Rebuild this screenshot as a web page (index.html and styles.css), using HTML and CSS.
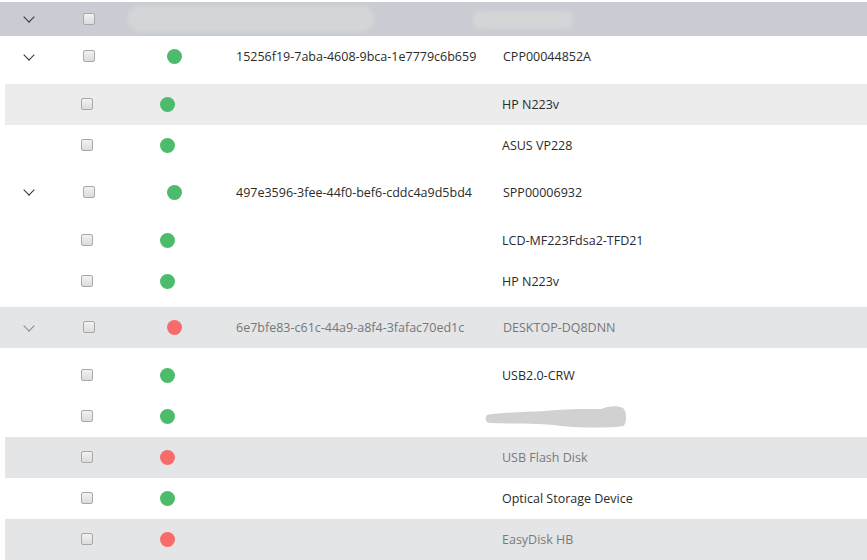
FILE: index.html
```html
<!DOCTYPE html>
<html>
<head>
<meta charset="utf-8">
<link rel="stylesheet" href="styles.css">
</head>
<body>
<div class="table">
  <div class="row head">
    <div class="c-exp"><span class="chev"></span></div>
    <div class="c-chk"><span class="box"></span></div>
    <div class="c-blur1"><span class="blob1"></span></div>
    <div class="c-blur2"><span class="blob2"></span></div>
  </div>

  <div class="group">
    <div class="row parent">
      <div class="c-exp"><span class="chev"></span></div>
      <div class="c-chk"><span class="box"></span></div>
      <div class="c-dot"><span class="dot on"></span></div>
      <div class="c-id">15256f19-7aba-4608-9bca-1e7779c6b659</div>
      <div class="c-name">CPP00044852A</div>
    </div>
    <div class="children">
      <div class="row child alt">
        <div class="c-pad"></div>
        <div class="c-chk2"><span class="box"></span></div>
        <div class="c-dot2"><span class="dot on"></span></div>
        <div class="c-sp"></div>
        <div class="c-name">HP N223v</div>
      </div>
      <div class="row child">
        <div class="c-pad"></div>
        <div class="c-chk2"><span class="box"></span></div>
        <div class="c-dot2"><span class="dot on"></span></div>
        <div class="c-sp"></div>
        <div class="c-name">ASUS VP228</div>
      </div>
    </div>
  </div>

  <div class="group">
    <div class="row parent">
      <div class="c-exp"><span class="chev"></span></div>
      <div class="c-chk"><span class="box"></span></div>
      <div class="c-dot"><span class="dot on"></span></div>
      <div class="c-id">497e3596-3fee-44f0-bef6-cddc4a9d5bd4</div>
      <div class="c-name">SPP00006932</div>
    </div>
    <div class="children">
      <div class="row child">
        <div class="c-pad"></div>
        <div class="c-chk2"><span class="box"></span></div>
        <div class="c-dot2"><span class="dot on"></span></div>
        <div class="c-sp"></div>
        <div class="c-name">LCD-MF223Fdsa2-TFD21</div>
      </div>
      <div class="row child">
        <div class="c-pad"></div>
        <div class="c-chk2"><span class="box"></span></div>
        <div class="c-dot2"><span class="dot on"></span></div>
        <div class="c-sp"></div>
        <div class="c-name">HP N223v</div>
      </div>
    </div>
  </div>

  <div class="group">
    <div class="row parent off">
      <div class="c-exp"><span class="chev light"></span></div>
      <div class="c-chk"><span class="box"></span></div>
      <div class="c-dot"><span class="dot err"></span></div>
      <div class="c-id">6e7bfe83-c61c-44a9-a8f4-3fafac70ed1c</div>
      <div class="c-name">DESKTOP-DQ8DNN</div>
    </div>
    <div class="children">
      <div class="row child">
        <div class="c-pad"></div>
        <div class="c-chk2"><span class="box"></span></div>
        <div class="c-dot2"><span class="dot on"></span></div>
        <div class="c-sp"></div>
        <div class="c-name">USB2.0-CRW</div>
      </div>
      <div class="row child">
        <div class="c-pad"></div>
        <div class="c-chk2"><span class="box"></span></div>
        <div class="c-dot2"><span class="dot on"></span></div>
        <div class="c-sp"></div>
        <div class="c-name shift"><svg class="smudge" width="144" height="24" viewBox="0 0 144 24"><path d="M4 10 C2 12 2 17 6 18 C30 19 60 18 78 21 C100 23 130 23 140 21 C144 19 144 6 140 3 C134 0 125 1 118 4 C100 4 85 4 62 6 C45 7 20 7 4 10 Z" fill="#d1d1d1"/></svg></div>
      </div>
      <div class="row child off">
        <div class="c-pad"></div>
        <div class="c-chk2"><span class="box"></span></div>
        <div class="c-dot2"><span class="dot err"></span></div>
        <div class="c-sp"></div>
        <div class="c-name">USB Flash Disk</div>
      </div>
      <div class="row child">
        <div class="c-pad"></div>
        <div class="c-chk2"><span class="box"></span></div>
        <div class="c-dot2"><span class="dot on"></span></div>
        <div class="c-sp"></div>
        <div class="c-name">Optical Storage Device</div>
      </div>
      <div class="row child off">
        <div class="c-pad"></div>
        <div class="c-chk2"><span class="box"></span></div>
        <div class="c-dot2"><span class="dot err"></span></div>
        <div class="c-sp"></div>
        <div class="c-name">EasyDisk HB</div>
      </div>
    </div>
  </div>
</div>
</body>
</html>
```

FILE: styles.css
```css
html, body {
  margin: 0;
  padding: 0;
  background: #ffffff;
  overflow: hidden;
}
body {
  font-family: "Open Sans", "Noto Sans", "Liberation Sans", sans-serif;
  font-size: 12.5px;
  color: #2b2b2b;
}
.table {
  padding-top: 2px;
  width: 867px;
}
.row {
  display: flex;
  align-items: center;
  height: 41px;
}
.head {
  height: 34px;
  background: #c9cdd3;
}
.group + .group {
  margin-top: 5.5px;
}
.children {
  padding-top: 7px;
}
.parent.off {
  background: #e4e5e7;
  color: #777777;
}
.child {
  margin-left: 5px;
}
.child.alt {
  background: #ececec;
}
.child.off {
  background: #e4e5e7;
  color: #7a7a7a;
}
.c-exp {
  width: 58px;
  display: flex;
  justify-content: center;
}
.c-chk {
  width: 61px;
  display: flex;
  justify-content: center;
}
.c-dot {
  width: 111px;
  display: flex;
  justify-content: center;
}
.c-id {
  width: 273px;
  padding-left: 6px;
  box-sizing: border-box;
  white-space: nowrap;
}
.c-name {
  white-space: nowrap;
}
.c-pad {
  width: 53px;
}
.c-chk2 {
  width: 57px;
  display: flex;
  justify-content: center;
}
.c-dot2 {
  width: 105px;
  display: flex;
  justify-content: center;
}
.c-sp {
  width: 282px;
}
.shift {
  margin-left: -19px;
  display: flex;
  padding-top: 1px;
}
.chev {
  display: block;
  width: 7px;
  height: 7px;
  border-right: 1.5px solid #333;
  border-bottom: 1.5px solid #333;
  transform: rotate(45deg);
  margin-top: -4px;
}
.chev.light {
  border-color: #8a8a8a;
}
.box {
  display: block;
  width: 10px;
  height: 10px;
  border: 1px solid #a8a8a8;
  border-radius: 2px;
  background: linear-gradient(#f2f2f2, #dcdcdc);
  margin-top: -1px;
}
.dot {
  display: block;
  width: 15px;
  height: 15px;
  border-radius: 50%;
}
.dot.on {
  background: #4cbb6c;
}
.dot.err {
  background: #f76b6b;
}
.c-blur1 {
  width: 354px;
  padding-left: 9px;
  box-sizing: border-box;
}
.blob1 {
  display: block;
  width: 246px;
  height: 26px;
  border-radius: 14px;
  background: #d4d5d7;
  filter: blur(2px);
}
.c-blur2 {
  display: flex;
}
.blob2 {
  display: block;
  width: 100px;
  height: 18px;
  border-radius: 8px;
  background: #d4d5d7;
  filter: blur(2px);
  margin-top: 2px;
}
```
